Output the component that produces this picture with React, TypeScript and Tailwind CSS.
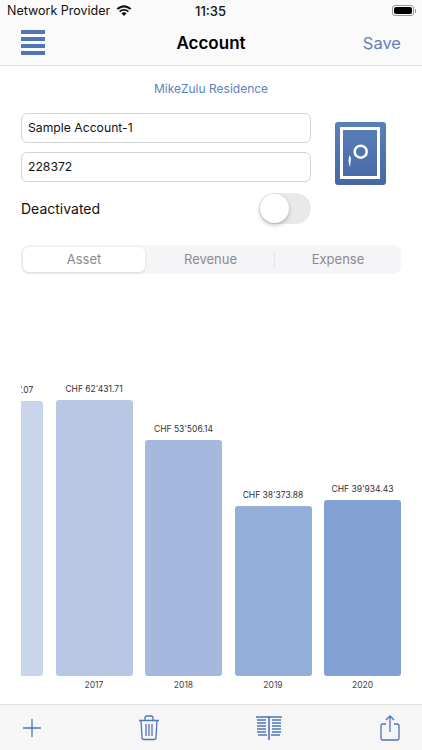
const font = { fontFamily: 'Inter, "Liberation Sans", sans-serif' };

const bars = [
  { year: "", label: "CHF 62'127.07", h: 275, color: "bg-[#c9d5ea]" },
  { year: "2017", label: "CHF 62'431.71", h: 276, color: "bg-[#b8c8e4]" },
  { year: "2018", label: "CHF 53'506.14", h: 236, color: "bg-[#a5b9df]" },
  { year: "2019", label: "CHF 38'373.88", h: 170, color: "bg-[#94aeda]" },
  { year: "2020", label: "CHF 39'934.43", h: 176, color: "bg-[#82a0d2]" },
];

function Bar({ b }: { b: (typeof bars)[number] }) {
  return (
    <div className="flex w-[77px] shrink-0 flex-col items-center">
      <div className="mb-[5px] whitespace-nowrap text-[8.5px] leading-[11px] text-[#333]">{b.label}</div>
      <div className={`w-full rounded-[3px] ${b.color}`} style={{ height: b.h }} />
      <div className="mt-[4px] h-[11px] text-[8.5px] leading-[11px] text-[#444]">{b.year}</div>
    </div>
  );
}

export default function App() {
  return (
    <div className="flex h-[750px] w-[422px] flex-col overflow-hidden bg-white" style={font}>
      {/* status bar */}
      <div className="relative flex h-[22px] shrink-0 items-center bg-[#fafafa] pl-[7px] text-[12.5px] text-[#111]">
        <span>Network Provider</span>
        <svg className="ml-[6px]" width="16" height="12" viewBox="0 0 16 12" fill="#111">
          <path d="M8 2.400c2.300 0 4.400.9 6 2.400l1.400-1.300C13.500 1.600 10.800.3 8 .3S2.500 1.600.6 3.500L2 4.800c1.600-1.500 3.700-2.400 6-2.400z" />
          <path d="M8 5.800c1.400 0 2.700.5 3.700 1.400l1.300-1.300C11.700 4.700 9.900 3.900 8 3.900s-3.700.8-5 2l1.300 1.300c1-.9 2.300-1.400 3.700-1.400z" />
          <path d="M8 7.200c-1 0-1.900.4-2.600 1L8 11l2.600-2.800c-.7-.6-1.600-1-2.600-1z" />
        </svg>
        <span className="absolute left-[195px] top-[3px] text-[13px] font-medium leading-[16px]">11:35</span>
        <div className="absolute left-[392px] top-[5px] flex items-center">
          <div className="h-[11px] w-[22px] rounded-[3px] border border-[#999] p-[1px]">
            <div className="h-full w-full rounded-[2px] bg-black" />
          </div>
          <div className="ml-[1px] h-[4px] w-[1px] bg-[#999]" />
        </div>
      </div>

      {/* nav */}
      <div className="relative flex h-[44px] shrink-0 items-center justify-between border-b border-[#dcdcdc] bg-[#fafafa] pl-[21px] pr-[21px]">
        <div className="mb-[2px] flex w-[24px] flex-col gap-[3.5px]">
          <div className="h-[3.5px] bg-[#4f76b8]" />
          <div className="h-[3.5px] bg-[#4f76b8]" />
          <div className="h-[3.5px] bg-[#4f76b8]" />
          <div className="h-[3.5px] bg-[#4f76b8]" />
        </div>
        <div className="absolute inset-x-0 text-center text-[17px] font-semibold text-black">Account</div>
        <div className="text-[16.5px] text-[#5d82bd]">Save</div>
      </div>

      <div className="mt-[15px] shrink-0 text-center text-[12px] leading-[16px] text-[#5d82bd]">MikeZulu Residence</div>

      {/* form */}
      <div className="mt-[16px] flex shrink-0 pl-[21px]">
        <div className="w-[290px]">
          <div className="flex h-[30px] items-center rounded-[6px] border border-[#d4d4d4] px-[6px] text-[12.2px] text-[#111]">Sample Account-1</div>
          <div className="mt-[9px] flex h-[30px] items-center rounded-[6px] border border-[#d4d4d4] px-[6px] text-[12.2px] text-[#111]">228372</div>
        </div>
        <svg className="ml-[24px] mt-[9px]" width="51" height="63" viewBox="0 0 51 63">
          <defs>
            <linearGradient id="safe" x1="0" y1="0" x2="0" y2="1">
              <stop offset="0" stopColor="#5a7fbb" />
              <stop offset="1" stopColor="#4669a6" />
            </linearGradient>
          </defs>
          <rect width="51" height="63" rx="3" fill="url(#safe)" />
          <rect x="6.500" y="6.500" width="37" height="49" fill="none" stroke="#fff" strokeWidth="3" />
          <circle cx="25.700" cy="29.700" r="6" fill="none" stroke="#fff" strokeWidth="2.500" />
          <path d="M14.500 33L16 36L15 45C13.500 42 13 38 14.500 33z" fill="#fff" />
        </svg>
      </div>

      <div className="mt-[8px] flex h-[31px] w-[311px] shrink-0 items-center justify-between pl-[21px]">
        <span className="text-[14px] text-[#111]">Deactivated</span>
        <div className="h-[31px] w-[52px] rounded-full bg-[#e9e9ea] p-[1px]">
          <div className="h-[29px] w-[29px] rounded-full bg-white shadow-[0_2px_4px_rgba(0,0,0,0.25)]" />
        </div>
      </div>

      {/* segment */}
      <div className="mx-[21px] mt-[21px] flex h-[29px] shrink-0 items-center rounded-[8px] bg-[#f5f5f7] p-[2px] text-[13px] text-[#8a8a8e]">
        <div className="flex h-full w-[122px] items-center justify-center rounded-[6px] bg-white shadow-[0_1px_3px_rgba(0,0,0,0.12)]">Asset</div>
        <div className="flex h-full w-[129px] items-center justify-center pl-[2px]">Revenue</div>
        <div className="h-[14px] w-px bg-[#e4e4e6]" />
        <div className="flex h-full flex-1 items-center justify-center pl-[2px]">Expense</div>
      </div>

      {/* chart */}
      <div className="mx-[21px] flex flex-1 items-end justify-end gap-[12.5px] overflow-hidden pb-[13px]">
        {bars.map((b) => (
          <Bar key={b.label} b={b} />
        ))}
      </div>

      {/* toolbar */}
      <div className="flex h-[46px] shrink-0 items-center border-t border-[#e2e2e2] bg-[#f6f6f6] pl-[22px]">
        <svg width="20" height="20" viewBox="0 0 20 20" stroke="#4f76b8" strokeWidth="1.300" fill="none">
          <path d="M10 1v18M1 10h18" />
        </svg>
        <svg className="ml-[96px]" width="22" height="26" viewBox="0 0 22 26" stroke="#4f76b8" strokeWidth="1.300" fill="none">
          <path d="M1 5.500h20M7 5.500V3a2 2 0 0 1 2-2h4a2 2 0 0 1 2 2v2.500" />
          <path d="M3 5.500l1 17a2 2 0 0 0 2 2h10a2 2 0 0 0 2-2l1-17" />
          <path d="M8 9v12M11 9v12M14 9v12" />
        </svg>
        <svg className="ml-[96px]" width="26" height="24" viewBox="0 0 26 24" stroke="#4f76b8" strokeWidth="1.300" fill="none">
          <path d="M13 0v24" strokeWidth="1.600" />
          <path d="M0 1h26M1 4h9M1 7h9M1 10h9M1 13h9M1 16h9M2 19h9M16 4h9M16 7h9M16 10h9M16 13h9M16 16h9M15 19h9" />
        </svg>
        <svg className="ml-[98px]" width="20" height="26" viewBox="0 0 20 26" stroke="#4f76b8" strokeWidth="1.300" fill="none">
          <path d="M6 9H3a2 2 0 0 0-2 2v12a2 2 0 0 0 2 2h14a2 2 0 0 0 2-2V11a2 2 0 0 0-2-2h-3" />
          <path d="M10 17V1M6 5l4-4 4 4" />
        </svg>
      </div>
    </div>
  );
}
